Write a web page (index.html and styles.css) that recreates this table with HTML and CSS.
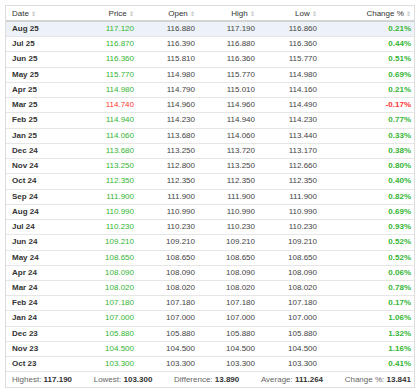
FILE: index.html
```html
<!DOCTYPE html>
<html lang="en">
<head>
    <meta charset="UTF-8">
    <meta name="viewport" content="width=device-width, initial-scale=1.0">
    <title>Historical Data</title>
    <link rel="stylesheet" href="styles.css">
</head>
<body>

<div class="history">
    <table class="history-table">
        <colgroup>
            <col class="w-date">
            <col class="w-price">
            <col class="w-open">
            <col class="w-high">
            <col class="w-low">
            <col class="w-chg">
        </colgroup>
        <thead>
            <tr>
                <th class="col-date">Date <span class="sort">&#8661;</span></th>
                <th class="col-num">Price <span class="sort">&#8661;</span></th>
                <th class="col-num">Open <span class="sort">&#8661;</span></th>
                <th class="col-num">High <span class="sort">&#8661;</span></th>
                <th class="col-num">Low <span class="sort">&#8661;</span></th>
                <th class="col-num">Change % <span class="sort">&#8661;</span></th>
            </tr>
        </thead>
        <tbody id="rows"></tbody>
    </table>
    <div class="summary">
        <span>Highest: <b>117.190</b></span>
        <span>Lowest: <b>103.300</b></span>
        <span>Difference: <b>13.890</b></span>
        <span>Average: <b>111.264</b></span>
        <span>Change %: <b>13.841</b></span>
    </div>
</div>

<script>
    const data = [
        ['Aug 25', '117.120', '116.880', '117.190', '116.860', '0.21%'],
        ['Jul 25', '116.870', '116.390', '116.880', '116.360', '0.44%'],
        ['Jun 25', '116.360', '115.810', '116.360', '115.770', '0.51%'],
        ['May 25', '115.770', '114.980', '115.770', '114.980', '0.69%'],
        ['Apr 25', '114.980', '114.790', '115.010', '114.160', '0.21%'],
        ['Mar 25', '114.740', '114.960', '114.960', '114.490', '-0.17%'],
        ['Feb 25', '114.940', '114.230', '114.940', '114.230', '0.77%'],
        ['Jan 25', '114.060', '113.680', '114.060', '113.440', '0.33%'],
        ['Dec 24', '113.680', '113.250', '113.720', '113.170', '0.38%'],
        ['Nov 24', '113.250', '112.800', '113.250', '112.660', '0.80%'],
        ['Oct 24', '112.350', '112.350', '112.350', '112.350', '0.40%'],
        ['Sep 24', '111.900', '111.900', '111.900', '111.900', '0.82%'],
        ['Aug 24', '110.990', '110.990', '110.990', '110.990', '0.69%'],
        ['Jul 24', '110.230', '110.230', '110.230', '110.230', '0.93%'],
        ['Jun 24', '109.210', '109.210', '109.210', '109.210', '0.52%'],
        ['May 24', '108.650', '108.650', '108.650', '108.650', '0.52%'],
        ['Apr 24', '108.090', '108.090', '108.090', '108.090', '0.06%'],
        ['Mar 24', '108.020', '108.020', '108.020', '108.020', '0.78%'],
        ['Feb 24', '107.180', '107.180', '107.180', '107.180', '0.17%'],
        ['Jan 24', '107.000', '107.000', '107.000', '107.000', '1.06%'],
        ['Dec 23', '105.880', '105.880', '105.880', '105.880', '1.32%'],
        ['Nov 23', '104.500', '104.500', '104.500', '104.500', '1.16%'],
        ['Oct 23', '103.300', '103.300', '103.300', '103.300', '0.41%']
    ];

    const tbody = document.getElementById('rows');
    data.forEach((r, i) => {
        const tr = document.createElement('tr');
        if (i === 0) tr.classList.add('current');
        const dir = r[5].startsWith('-') ? 'down' : 'up';
        tr.innerHTML = `
            <td class="col-date">${r[0]}</td>
            <td class="col-num ${dir}">${r[1]}</td>
            <td class="col-num">${r[2]}</td>
            <td class="col-num">${r[3]}</td>
            <td class="col-num">${r[4]}</td>
            <td class="col-num col-chg ${dir}">${r[5]}</td>
        `;
        tbody.appendChild(tr);
    });
</script>

</body>
</html>
```

FILE: styles.css
```css
body { font-family: "Liberation Sans", Arial, sans-serif; margin: 5px; background-color: #fff; color: #333; }
.history { width: 408px; border: 1px solid #ddd; }
.history-table { width: 100%; border-collapse: collapse; font-size: 8px; table-layout: fixed; }
.w-date { width: 69px; }
.w-price { width: 62px; }
.w-open { width: 61px; }
.w-high { width: 60px; }
.w-low { width: 62px; }
.w-chg { width: 94px; }
.history-table th { font-weight: normal; color: #333; height: 14px; padding: 0 3px 0 6px; border-bottom: 2px solid #d4d4d4; white-space: nowrap; }
.history-table td { height: 14.23px; line-height: 14.23px; padding: 0 3px 0 6px; border-bottom: 1px solid #e6e6e6; color: #444; white-space: nowrap; }
.history-table tr.current td { background-color: #edf2f8; }
.sort { color: #b0b0b0; font-size: 6px; }
.col-date { text-align: left; }
.history-table td.col-date { font-weight: bold; color: #333; }
.col-num { text-align: right; }
.history-table td.col-chg { font-weight: bold; }
.history-table td.up { color: #33b533; }
.history-table td.down { color: #f33; }
.summary { display: flex; justify-content: space-between; padding: 0 3px 0 6px; height: 15px; line-height: 15px; font-size: 8px; color: #666; }
.summary b { color: #333; }
```
